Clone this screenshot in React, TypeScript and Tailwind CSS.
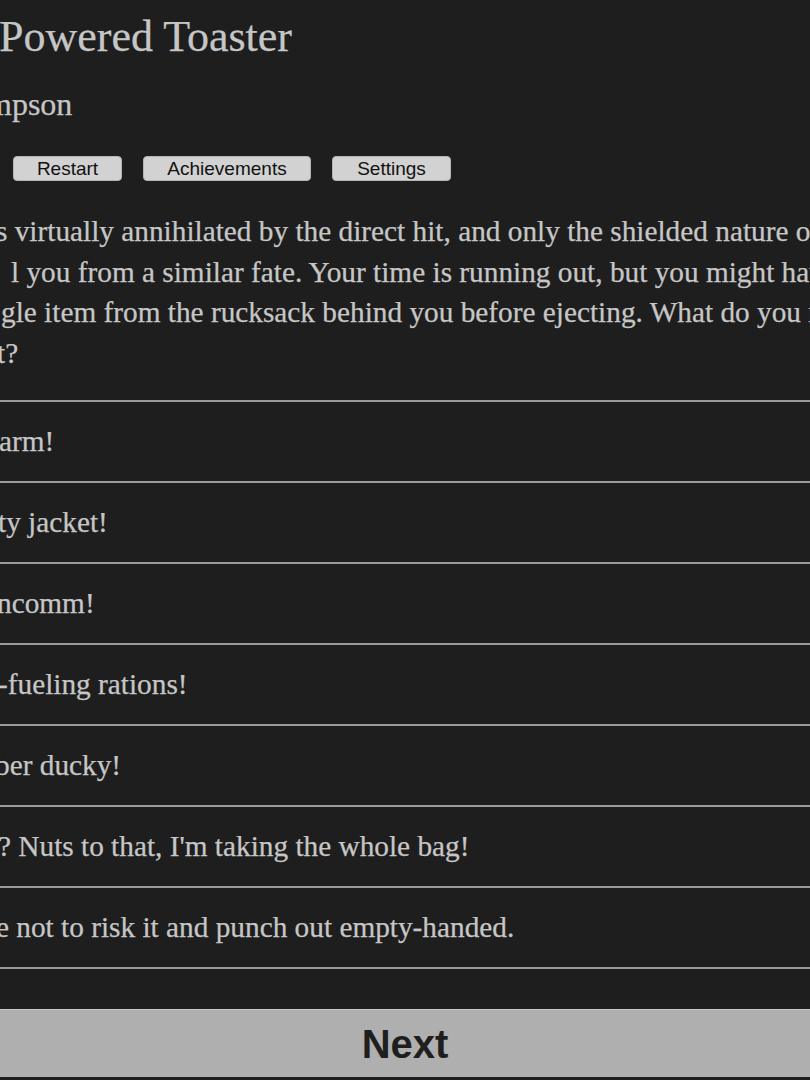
import React from "react";

const serif = { fontFamily: '"Liberation Serif", "Times New Roman", serif' };
const sans = { fontFamily: '"Liberation Sans", Arial, Helvetica, sans-serif' };

const paraLines: { text: string; ml: string }[] = [
  { text: "s virtually annihilated by the direct hit, and only the shielded nature of your", ml: "ml-[-4px]" },
  { text: "l you from a similar fate. Your time is running out, but you might have time", ml: "ml-[11px]" },
  { text: "gle item from the rucksack behind you before ejecting. What do you reach for", ml: "ml-[1px]" },
  { text: "t?", ml: "ml-[-3px]" },
];

const options: { text: string; ml: string }[] = [
  { text: "arm!", ml: "ml-[-1px]" },
  { text: "ty jacket!", ml: "ml-[-2px]" },
  { text: "ncomm!", ml: "ml-[-3px]" },
  { text: "-fueling rations!", ml: "ml-[-2px]" },
  { text: "ber ducky!", ml: "ml-[-5px]" },
  { text: "? Nuts to that, I'm taking the whole bag!", ml: "ml-[-2px]" },
  { text: "e not to risk it and punch out empty-handed.", ml: "ml-[-4px]" },
];

function Btn({ label, w }: { label: string; w: string }) {
  return (
    <button
      className={`h-[25px] ${w} rounded-[4px] border border-[#b4b4b4] bg-[#d2d2d2] text-[19px] leading-[23px] text-[#111111]`}
      style={sans}
    >
      {label}
    </button>
  );
}

export default function App() {
  return (
    <div
      className="w-[810px] h-[1080px] overflow-hidden bg-[#1e1e1e] text-[#c6c6c6] [-webkit-text-stroke:0.25px_#c6c6c6]"
      style={serif}
    >
      <div className="pt-[15px] text-[44px] leading-[44px] whitespace-nowrap ml-[-1px]">Powered Toaster</div>
      <div className="mt-[29px] text-[32px] leading-[32px] whitespace-nowrap ml-[-13px]">mpson</div>
      <div className="mt-[36px] flex gap-[21px] pl-[13px] [-webkit-text-stroke:0px]">
        <Btn label="Restart" w="w-[109px]" />
        <Btn label="Achievements" w="w-[168px]" />
        <Btn label="Settings" w="w-[119px]" />
      </div>
      <div className="mt-[30px] text-[29.3px] leading-[40.5px]">
        {paraLines.map((l, i) => (
          <div key={i} className={`whitespace-nowrap ${l.ml}`}>
            {l.text}
          </div>
        ))}
      </div>
      <div className="mt-[27px]">
        {options.map((o, i) => (
          <div key={i}>
            <div className="h-[2px] bg-[#9a9a9a]" />
            <div className="h-[79px] pt-[19px] text-[29.3px] leading-[40.5px]">
              <div className={`whitespace-nowrap ${o.ml}`}>{o.text}</div>
            </div>
          </div>
        ))}
        <div className="h-[2px] bg-[#9a9a9a]" />
      </div>
      <div className="mt-[40px] h-[68px] border-t border-[#c6c6c6] bg-[#afafaf] flex items-center justify-center [-webkit-text-stroke:0px]">
        <span className="text-[40px] font-bold text-[#1e1e1e] leading-none" style={sans}>
          Next
        </span>
      </div>
    </div>
  );
}
